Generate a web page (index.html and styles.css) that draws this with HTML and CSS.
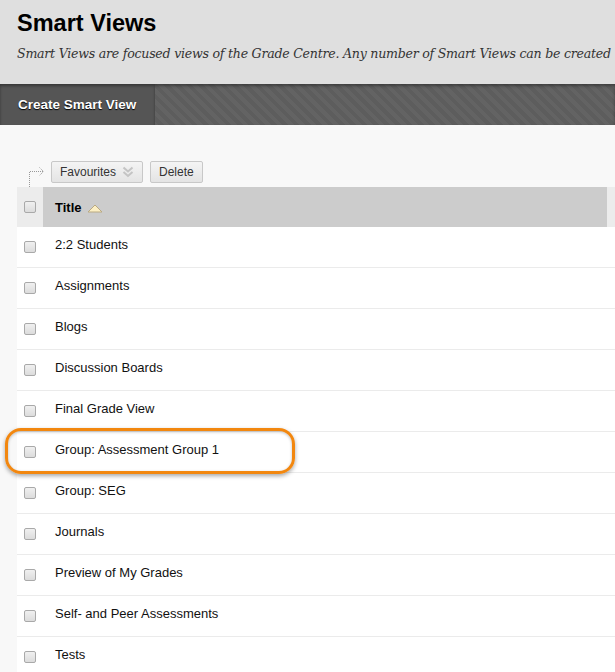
FILE: index.html
```html
<!DOCTYPE html>
<html>
<head>
<meta charset="utf-8">
<link rel="stylesheet" href="styles.css">
</head>
<body>
<div class="page">
  <header class="page-header">
    <h1 class="page-title">Smart Views</h1>
    <p class="page-desc">Smart Views are focused views of the Grade Centre. Any number of Smart Views can be created</p>
  </header>
  <nav class="action-bar">
    <a class="action-btn">Create Smart View</a>
    <div class="action-fill"></div>
  </nav>
  <main class="content">
    <div class="list-actions">
      <svg class="arrow" width="22" height="26" viewBox="0 0 22 26">
        <path d="M4.5 26 V10.5 H18" fill="none" stroke="#999" stroke-width="1" stroke-dasharray="1 1"/>
        <path d="M14.5 6.5 L18.5 10.5 L14.5 14.5" fill="none" stroke="#999" stroke-width="1" stroke-dasharray="1 1"/>
      </svg>
      <button class="btn">Favourites
        <svg class="chev" width="12" height="12" viewBox="0 0 12 12">
          <path d="M1.5 1.5 L6 5.5 L10.5 1.5" fill="none" stroke="#c4c4c4" stroke-width="2"/>
          <path d="M1.5 6 L6 10 L10.5 6" fill="none" stroke="#c4c4c4" stroke-width="2"/>
        </svg>
      </button>
      <button class="btn">Delete</button>
    </div>
    <div class="table">
      <div class="row head">
        <div class="cell-check"><span class="cb"></span></div>
        <div class="cell-title">Title
          <svg class="sort" width="16" height="10" viewBox="0 0 16 10">
            <path d="M1 9 L8 2 L15 9 Z" fill="#fcefc4" stroke="#b9a982" stroke-width="1"/>
          </svg>
        </div>
        <div class="cell-end"></div>
      </div>
      <div class="row"><div class="cell-check"><span class="cb"></span></div><div class="cell-title">2:2 Students</div></div>
      <div class="row"><div class="cell-check"><span class="cb"></span></div><div class="cell-title">Assignments</div></div>
      <div class="row"><div class="cell-check"><span class="cb"></span></div><div class="cell-title">Blogs</div></div>
      <div class="row"><div class="cell-check"><span class="cb"></span></div><div class="cell-title">Discussion Boards</div></div>
      <div class="row"><div class="cell-check"><span class="cb"></span></div><div class="cell-title">Final Grade View</div></div>
      <div class="row highlighted"><div class="cell-check"><span class="cb"></span></div><div class="cell-title">Group: Assessment Group 1</div><div class="callout"></div></div>
      <div class="row"><div class="cell-check"><span class="cb"></span></div><div class="cell-title">Group: SEG</div></div>
      <div class="row"><div class="cell-check"><span class="cb"></span></div><div class="cell-title">Journals</div></div>
      <div class="row"><div class="cell-check"><span class="cb"></span></div><div class="cell-title">Preview of My Grades</div></div>
      <div class="row"><div class="cell-check"><span class="cb"></span></div><div class="cell-title">Self- and Peer Assessments</div></div>
      <div class="row"><div class="cell-check"><span class="cb"></span></div><div class="cell-title">Tests</div></div>
    </div>
  </main>
</div>
</body>
</html>
```
FILE: styles.css
```css
* { box-sizing: border-box; }
html, body { margin: 0; padding: 0; }
body {
  width: 615px;
  height: 672px;
  overflow: hidden;
  background: #f8f8f8;
  font-family: Arial, "Liberation Sans", sans-serif;
  color: #000;
}
.page { width: 615px; }
.page-header {
  background: #dfdfdf;
  height: 84px;
  padding: 9px 0 0 17px;
  white-space: nowrap;
  overflow: hidden;
}
.page-title {
  margin: 0;
  font-size: 23.5px;
  font-weight: bold;
  line-height: 28px;
  color: #000;
}
.page-desc {
  margin: 8px 0 0;
  font-family: "DejaVu Serif", Georgia, serif;
  font-style: italic;
  font-size: 12.6px;
  letter-spacing: -0.25px;
  line-height: 18px;
  color: #333;
}
.action-bar {
  display: flex;
  height: 41px;
  background: repeating-linear-gradient(45deg, #5d5d5d 0, #5d5d5d 4px, #636363 4px, #636363 8px);
  box-shadow: inset 0 2px 3px rgba(0,0,0,0.35);
}
.action-btn {
  width: 155px;
  background: #555;
  color: #fff;
  font-weight: bold;
  font-size: 13.5px;
  padding-left: 18px;
  display: flex;
  align-items: center;
  text-shadow: 0 1px 1px #000;
  box-shadow: inset 0 2px 3px rgba(0,0,0,0.35);
}
.action-fill { flex: 1; }
.content {
  padding: 36px 0 0 17px;
}
.list-actions {
  display: flex;
  align-items: flex-start;
  gap: 7px;
  height: 26px;
}
.arrow { display: block; margin: 0 -3px 0 8px; }
.btn {
  height: 22px;
  padding: 0 8px;
  font-family: Arial, "Liberation Sans", sans-serif;
  font-size: 12px;
  color: #333;
  background: linear-gradient(#f4f4f4, #e4e4e4);
  border: 1px solid #c8c8c8;
  border-radius: 2px;
  display: flex;
  align-items: center;
  gap: 6px;
}
.chev { display: block; }
.table { background: #fff; }
.row {
  display: flex;
  height: 41px;
  border-bottom: 1px solid #ebebeb;
  position: relative;
  font-size: 13px;
}
.row.head {
  height: 40px;
  border-bottom: none;
  font-weight: bold;
}
.cell-check {
  width: 26px;
  display: flex;
  align-items: center;
  justify-content: center;
}
.head .cell-check { background: #ececec; }
.cb {
  width: 12px;
  height: 12px;
  border: 1px solid #a9a9a9;
  border-radius: 2px;
  background: linear-gradient(#f0f0f0, #dcdcdc);
}
.cell-title {
  flex: 1;
  display: flex;
  align-items: center;
  padding-left: 12px;
  padding-bottom: 6px;
  color: #111;
}
.head .cell-title { background: #cccccc; padding-bottom: 0; color: #000; }
.sort { margin-left: 5px; margin-top: 2px; }
.cell-end { width: 8px; background: #ececec; }
.callout {
  position: absolute;
  left: -12px;
  top: -4px;
  width: 290px;
  height: 46px;
  border: 3px solid #f2870f;
  border-radius: 16px;
  box-shadow: 0 2px 4px rgba(0,0,0,0.35), inset 0 1px 3px rgba(0,0,0,0.25);
  pointer-events: none;
}
```
